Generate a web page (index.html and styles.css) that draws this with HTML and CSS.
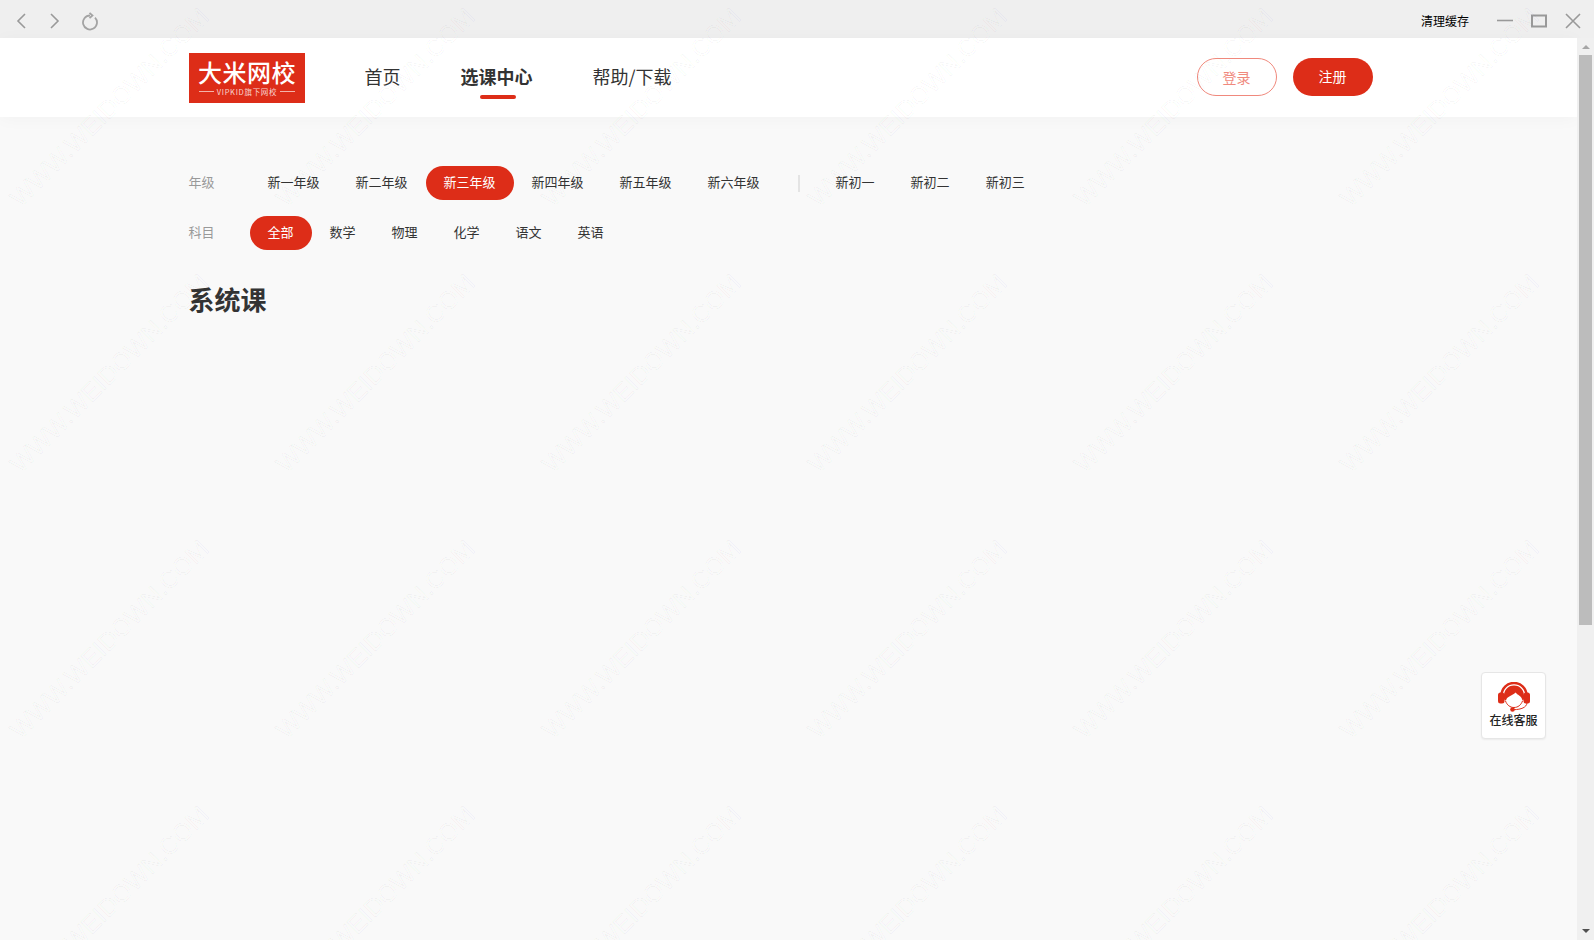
FILE: index.html
```html
<!DOCTYPE html>
<html lang="zh-CN">
<head>
  <meta charset="UTF-8">
  <title>大米网校 - 选课中心</title>
  <link rel="stylesheet" href="styles.css">
</head>
<body>
  <div class="titlebar">
    <div class="tb-left">
      <svg class="tb-icon" width="14" height="16" viewBox="0 0 14 16"><path d="M11 1 4 8l7 7"/></svg>
      <svg class="tb-icon" width="14" height="16" viewBox="0 0 14 16"><path d="M3 1l7 7-7 7"/></svg>
      <svg class="tb-icon tb-reload" width="18" height="20" viewBox="0 0 18 20"><path d="M13 5.600A7 7 0 1 1 8 3.500"/><path d="M7.500 0.800 10.500 3.500 7.500 6.200"/></svg>
    </div>
    <div class="tb-right">
      <span class="clear-cache">清理缓存</span>
      <svg class="tb-icon" width="16" height="16" viewBox="0 0 16 16"><path d="M0 7.500h16"/></svg>
      <svg class="tb-icon tb-max" width="16" height="14" viewBox="0 0 16 14"><path d="M1 1.500h14v11H1z"/></svg>
      <svg class="tb-icon" width="16" height="16" viewBox="0 0 16 16"><path d="M1 1l14 14M15 1 1 15"/></svg>
    </div>
  </div>

  <div class="window">
    <div class="page">
      <header class="header">
        <div class="wrap header-inner">
          <div class="logo">
            <div class="logo-name">大米网校</div>
            <div class="logo-sub"><i></i><span>VIPKID旗下网校</span><i></i></div>
          </div>
          <nav class="nav">
            <a class="nav-item">首页</a>
            <a class="nav-item active">选课中心</a>
            <a class="nav-item">帮助/下载</a>
          </nav>
          <div class="auth">
            <button class="btn btn-login">登录</button>
            <button class="btn btn-reg">注册</button>
          </div>
        </div>
      </header>

      <main class="wrap content">
        <div class="filter">
          <span class="filter-label">年级</span>
          <a class="pill">新一年级</a>
          <a class="pill">新二年级</a>
          <a class="pill on">新三年级</a>
          <a class="pill">新四年级</a>
          <a class="pill">新五年级</a>
          <a class="pill">新六年级</a>
          <span class="filter-sep"></span>
          <a class="pill">新初一</a>
          <a class="pill">新初二</a>
          <a class="pill">新初三</a>
        </div>
        <div class="filter">
          <span class="filter-label">科目</span>
          <a class="pill on">全部</a>
          <a class="pill">数学</a>
          <a class="pill">物理</a>
          <a class="pill">化学</a>
          <a class="pill">语文</a>
          <a class="pill">英语</a>
        </div>
        <h2 class="section-title">系统课</h2>
      </main>

      <div class="service">
        <svg width="32" height="30" viewBox="0 0 32 30">
          <path class="hs-band" d="M3.500 13.500A12.500 12.500 0 0 1 28.500 13.500"/>
          <rect class="hs-red" x="0" y="10.500" width="6.500" height="11" rx="2.500"/>
          <rect class="hs-red" x="25.500" y="10.500" width="6.500" height="11" rx="2.500"/>
          <path class="hs-red" d="M6 17C5 8 10 3.500 16 3.500S27 8 26 17C25 19 24.500 19 24 17 23 14 19.500 13 17.500 10.500 15 13.500 10 14 8.500 17 8 19 7 19 6 17z"/>
          <path class="hs-line" d="M7.500 19C9 23 12 25.500 16 25.500S23 23 24.500 19"/>
          <path class="hs-line" d="M29 21C28.500 25.500 23 27.500 16 27.700"/>
          <circle class="hs-red" cx="14.500" cy="27.500" r="2.300"/>
        </svg>
        <span class="service-text">在线客服</span>
      </div>
    </div>

    <div class="scrollbar">
      <span class="arrow arrow-up"></span>
      <span class="thumb"></span>
      <span class="arrow arrow-down"></span>
    </div>
  </div>

  <div class="watermarks">
    <div class="wm-grid">
      <span>WWW.WEIDOWN.COM</span><span>WWW.WEIDOWN.COM</span><span>WWW.WEIDOWN.COM</span><span>WWW.WEIDOWN.COM</span><span>WWW.WEIDOWN.COM</span><span>WWW.WEIDOWN.COM</span>
      <span>WWW.WEIDOWN.COM</span><span>WWW.WEIDOWN.COM</span><span>WWW.WEIDOWN.COM</span><span>WWW.WEIDOWN.COM</span><span>WWW.WEIDOWN.COM</span><span>WWW.WEIDOWN.COM</span>
      <span>WWW.WEIDOWN.COM</span><span>WWW.WEIDOWN.COM</span><span>WWW.WEIDOWN.COM</span><span>WWW.WEIDOWN.COM</span><span>WWW.WEIDOWN.COM</span><span>WWW.WEIDOWN.COM</span>
      <span>WWW.WEIDOWN.COM</span><span>WWW.WEIDOWN.COM</span><span>WWW.WEIDOWN.COM</span><span>WWW.WEIDOWN.COM</span><span>WWW.WEIDOWN.COM</span><span>WWW.WEIDOWN.COM</span>
    </div>
  </div>
</body>
</html>
```

FILE: styles.css
```css
* {
  margin: 0;
  padding: 0;
  box-sizing: border-box;
}

html,
body {
  height: 100%;
  overflow: hidden;
}

body {
  display: flex;
  flex-direction: column;
  position: relative;
  font-family: "Noto Sans CJK SC", "Noto Sans", sans-serif;
  color: #333;
  background: #f9f9f9;
}

.titlebar {
  flex: none;
  height: 38px;
  display: flex;
  justify-content: space-between;
  align-items: center;
  padding-top: 3px;
  background: #efefef;
}

.tb-left {
  display: flex;
  align-items: center;
  gap: 20px;
  padding-left: 14px;
}

.tb-right {
  display: flex;
  align-items: center;
  gap: 18px;
  padding-right: 13px;
}

.tb-icon {
  fill: none;
  stroke: #999;
  stroke-width: 1.6;
}

.tb-reload {
  margin-top: 3px;
  stroke: #a3a3a3;
  stroke-width: 1.8;
}

.tb-max {
  stroke-width: 2;
}

.clear-cache {
  margin-right: 10px;
  font-size: 12px;
  color: #000;
}

.window {
  flex: 1;
  display: flex;
  min-height: 0;
}

.page {
  flex: 1;
  position: relative;
  min-width: 0;
}

.wrap {
  width: 1200px;
  margin: 0 auto;
}

.header {
  height: 79px;
  background: #fff;
  box-shadow: 0 2px 16px rgba(0, 0, 0, 0.03);
}

.header-inner {
  display: flex;
  align-items: center;
  height: 100%;
  padding-right: 16px;
}

.logo {
  width: 116px;
  height: 50px;
  display: flex;
  flex-direction: column;
  align-items: center;
  padding-left: 1px;
  background: #dd2d18;
  color: #fff;
}

.logo-name {
  margin-top: 6px;
  font-size: 24px;
  font-weight: 500;
  line-height: 26px;
  letter-spacing: 0.5px;
  white-space: nowrap;
}

.logo-sub {
  display: flex;
  align-items: center;
  gap: 3px;
  margin-top: 2px;
  font-size: 7.500px;
  line-height: 9px;
  letter-spacing: 0.7px;
  white-space: nowrap;
  color: #f8d5d0;
}

.logo-sub i {
  width: 15px;
  height: 1px;
  background: #f3b3aa;
}

.nav {
  display: flex;
  gap: 60px;
  margin-left: 60px;
  padding-bottom: 3px;
}

.nav-item {
  position: relative;
  font-size: 18px;
  line-height: 26px;
}

.nav-item.active {
  font-weight: 700;
}

.nav-item.active::after {
  content: "";
  position: absolute;
  left: 19px;
  bottom: -10px;
  width: 36px;
  height: 4px;
  border-radius: 2px;
  background: #dd2d18;
}

.auth {
  display: flex;
  gap: 16px;
  margin-left: auto;
  padding-bottom: 2px;
}

.btn {
  width: 80px;
  height: 38px;
  border-radius: 19px;
  font-family: inherit;
  font-size: 14px;
}

.btn-login {
  border: 1px solid #f0897d;
  background: #fff;
  color: #f0897d;
}

.btn-reg {
  padding-bottom: 2px;
  border: none;
  background: #dd2d18;
  color: #fff;
}

.content {
  padding-top: 49px;
}

.filter {
  display: flex;
  align-items: center;
  height: 34px;
  margin-bottom: 16px;
}

.filter-label {
  width: 61px;
  margin-top: -3px;
  font-size: 13px;
  color: #999;
}

.pill {
  height: 34px;
  padding: 0 18px;
  border-radius: 17px;
  font-size: 13px;
  line-height: 32px;
  color: #333;
}

.pill.on {
  background: #dd2d18;
  color: #fff;
}

.filter-sep {
  width: 2px;
  height: 17px;
  margin: 0 18px 0 20px;
  background: #e4e4e4;
}

.section-title {
  margin-top: 30px;
  font-size: 26px;
  line-height: 38px;
  font-weight: 700;
  color: #333;
}

.service {
  position: absolute;
  right: 31px;
  top: 634px;
  width: 65px;
  height: 67px;
  display: flex;
  flex-direction: column;
  align-items: center;
  padding-top: 9px;
  border: 1px solid #e6e6e6;
  border-radius: 4px;
  background: #fff;
  box-shadow: 0 1px 2px rgba(0, 0, 0, 0.06);
}

.hs-red {
  fill: #dd2d18;
}

.hs-band {
  fill: none;
  stroke: #dd2d18;
  stroke-width: 2.500;
}

.hs-line {
  fill: none;
  stroke: #dd2d18;
  stroke-width: 1;
}

.service-text {
  margin-top: 1px;
  font-size: 12px;
  font-weight: 500;
  line-height: 14px;
  color: #222;
  white-space: nowrap;
}

.scrollbar {
  flex: none;
  width: 17px;
  position: relative;
  background: #f0f0f0;
}

.thumb {
  position: absolute;
  top: 17px;
  left: 2px;
  width: 13px;
  height: 570px;
  background: #bcbcbc;
}

.arrow {
  position: absolute;
  left: 5px;
  width: 0;
  height: 0;
  border-left: 4px solid transparent;
  border-right: 4px solid transparent;
}

.arrow-up {
  top: 7px;
  border-bottom: 4px solid #a6a6a6;
}

.arrow-down {
  bottom: 7px;
  border-top: 4px solid #505050;
}

/* download site stamp over the whole window */
.watermarks {
  position: absolute;
  inset: 0;
  overflow: hidden;
  pointer-events: none;
}

.wm-grid {
  display: grid;
  grid-template-columns: repeat(6, 266px);
  grid-auto-rows: 266px;
  margin: -26px 0 0 -24px;
}

.wm-grid span {
  display: flex;
  align-items: center;
  justify-content: center;
  font-family: "Liberation Sans", Arial, sans-serif;
  font-size: 25px;
  white-space: nowrap;
  color: transparent;
  -webkit-text-stroke: 1px rgba(0, 0, 0, 0.035);
  transform: rotate(-45deg);
}
```
